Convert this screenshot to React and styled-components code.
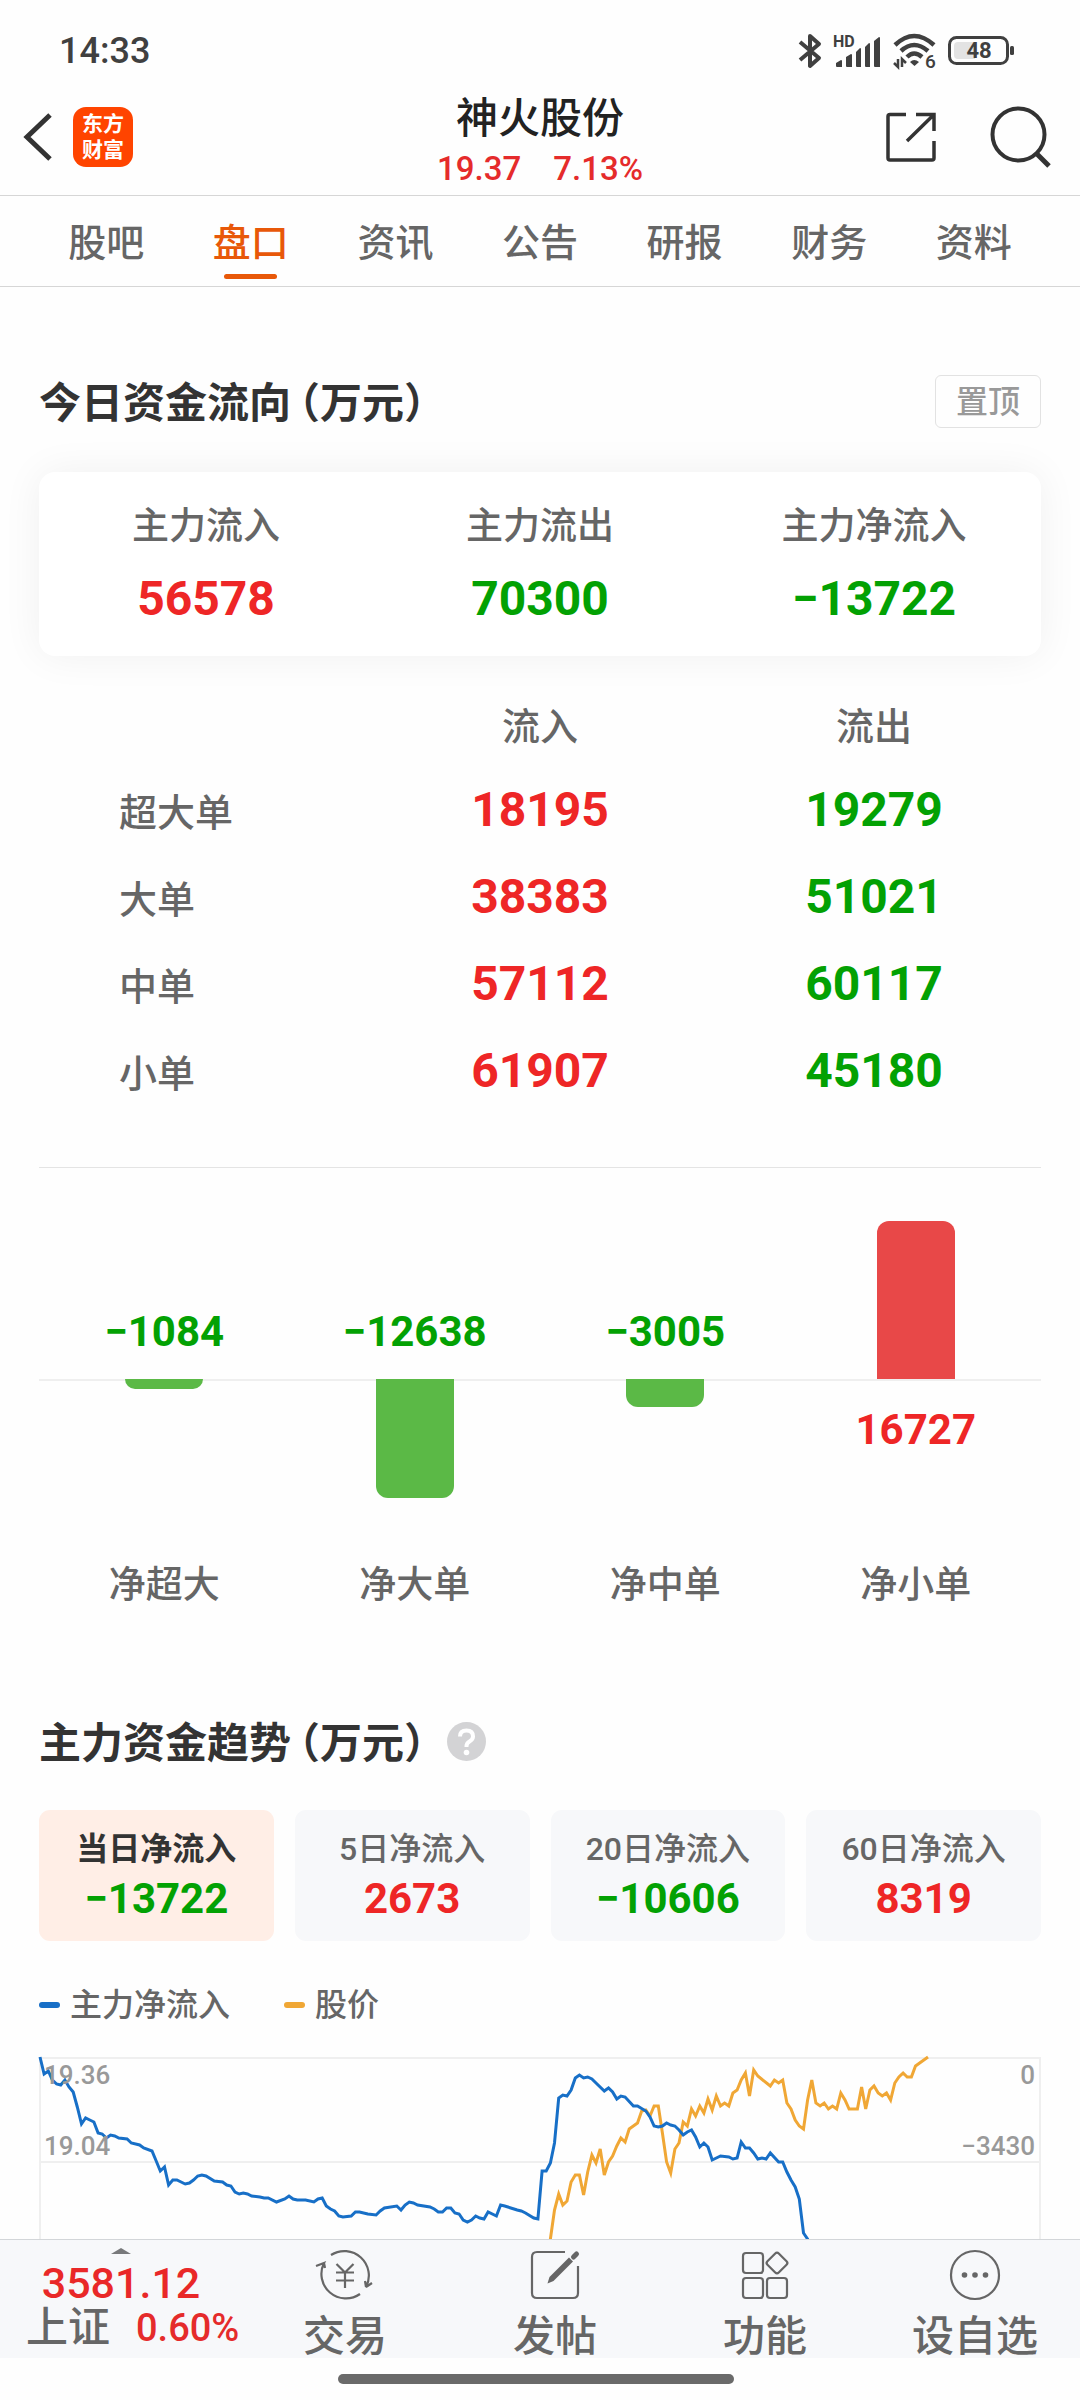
import React, { useState } from "react";
import styled, { createGlobalStyle } from "styled-components";

const color = {
  page: "#fefefe",
  panel: "#f7f8fa",
  ink: "#333333",
  text: "#666666",
  muted: "#999999",
  line: "#d6d6d6",
  grid: "#efefef",
  up: "#ee2626",
  down: "#03a103",
  barUp: "#e84848",
  barDown: "#5bb946",
  accent: "#e85809",
  flow: "#176fc7",
  price: "#f0a735",
};

const signColor = (n) => (n < 0 ? color.down : color.up);
const format = (n) => (n < 0 ? `−${-n}` : `${n}`);

const GlobalStyle = createGlobalStyle`
  *, *::before, *::after { box-sizing: border-box; }
  body {
    margin: 0;
    background: ${color.page};
    color: ${color.text};
    font-family: Roboto, "Noto Sans CJK SC", sans-serif;
    font-weight: 500;
  }
  button {
    margin: 0;
    padding: 0;
    border: 0;
    background: none;
    color: inherit;
    font: inherit;
    cursor: pointer;
  }
  a { color: inherit; text-decoration: none; }
  h1, h2, p { margin: 0; }
  svg { display: block; flex: none; }
`;

const Shell = styled.div`
  display: flex;
  flex-direction: column;
  height: 100vh;
`;

/* ---------- status bar ---------- */

const StatusBar = styled.div`
  display: flex;
  align-items: center;
  justify-content: space-between;
  height: 79px;
  padding: 22px 66px 0 59px;
  color: #404040;
`;

const Clock = styled.span`
  font-size: 36px;
  line-height: 44px;
`;

const StatusIcons = styled.div`
  display: flex;
  align-items: center;
  gap: 10px;
`;

/* ---------- header ---------- */

const Header = styled.header`
  display: grid;
  grid-template-columns: 1fr auto 1fr;
  align-items: center;
  height: 117px;
  padding: 0 23px;
  border-bottom: 1px solid ${color.line};
`;

const HeaderSide = styled.div`
  display: flex;
  align-items: center;
  justify-content: ${(p) => (p.$end ? "flex-end" : "flex-start")};
  gap: ${(p) => (p.$end ? "54px" : "20px")};
  color: ${color.ink};
`;

const Logo = styled.a`
  display: grid;
  place-content: center;
  width: 60px;
  height: 60px;
  border-radius: 13px;
  background: #ff4400;
  color: #ffffff;
  font-size: 21px;
  font-weight: 700;
  line-height: 26px;
`;

const Quote = styled.div`
  display: flex;
  flex-direction: column;
  align-items: center;
  padding-top: 14px;
`;

const StockName = styled.h1`
  color: #222222;
  font-size: 42px;
  font-weight: 500;
  line-height: 50px;
`;

const StockPrice = styled.p`
  display: flex;
  gap: 32px;
  color: #e52b2b;
  font-size: 33px;
  line-height: 50px;
`;

/* ---------- tabs ---------- */

const Tabs = styled.nav`
  display: grid;
  grid-template-columns: repeat(7, 1fr);
  padding: 0 34px;
  border-bottom: 1px solid ${color.line};
`;

const Tab = styled.a`
  display: flex;
  flex-direction: column;
  align-items: center;
  gap: 7px;
  padding: 23px 0 7px;
  color: ${(p) => (p.$active ? color.accent : color.text)};
  font-size: 38px;
  line-height: 48px;

  &::after {
    content: "";
    width: 53px;
    height: 5px;
    border-radius: 3px;
    background: ${(p) => (p.$active ? color.accent : "transparent")};
  }
`;

/* ---------- content ---------- */

const Content = styled.main`
  flex: 1;
  min-height: 0;
  padding: 88px 39px 0;
  overflow-y: auto;
  scrollbar-width: none;
`;

const SectionHead = styled.div`
  display: flex;
  align-items: center;
  gap: 22px;
  margin-top: ${(p) => p.$top || 0}px;
`;

const SectionTitle = styled.h2`
  padding-top: 5px;
  color: ${color.ink};
  font-size: 42px;
  font-weight: 700;
  line-height: 48px;
`;

const Unit = styled.span`
  margin-left: 8px;
  font-feature-settings: "halt";
`;

const PinButton = styled.button`
  margin-left: auto;
  padding: 2px 20px 0;
  border: 1px solid #e2e2e2;
  border-radius: 6px;
  color: ${color.muted};
  font-size: 32px;
  line-height: 49px;
`;

const Summary = styled.dl`
  display: grid;
  grid-template-columns: repeat(3, 1fr);
  margin: 44px 0 0;
  padding: 33px 0 29px;
  border-radius: 16px;
  background: #ffffff;
  box-shadow: 0 0 40px rgba(0, 0, 0, 0.06);
  text-align: center;
`;

const SummaryItem = styled.div`
  display: grid;
  gap: 22px;
`;

const SummaryLabel = styled.dt`
  font-size: 37px;
  line-height: 44px;
`;

const SummaryValue = styled.dd`
  margin: 0;
  color: ${(p) => p.$color};
  font-size: 48px;
  font-weight: 700;
  line-height: 56px;
`;

const FlowTable = styled.table`
  width: 100%;
  margin-top: 36px;
  border-collapse: collapse;
  table-layout: fixed;

  th, td { padding: 0; vertical-align: baseline; }
`;

const ColumnHead = styled.th`
  && { padding-bottom: 6px; }
  font-size: 38px;
  font-weight: 500;
  line-height: 70px;
`;

const RowHead = styled.th`
  && { padding-left: 80px; }
  font-size: 38px;
  font-weight: 500;
  line-height: 84px;
  text-align: left;
`;

const Amount = styled.td`
  color: ${(p) => p.$color};
  font-size: 48px;
  font-weight: 700;
  line-height: 84px;
  text-align: center;
`;

const BarChart = styled.div`
  display: grid;
  grid-template-columns: repeat(4, 1fr);
  margin-top: 51px;
  border-top: 1px solid #e4e4e4;
`;

const BarColumn = styled.div`
  display: flex;
  flex-direction: column;
  text-align: center;
`;

const BarUpper = styled.div`
  display: flex;
  flex-direction: column;
  align-items: center;
  justify-content: flex-end;
  height: 211px;
`;

const BarLower = styled.div`
  display: flex;
  flex-direction: column;
  align-items: center;
  height: 185px;
  box-shadow: inset 0 2px ${color.grid};
`;

const Bar = styled.div`
  width: 78px;
  border-radius: ${(p) => (p.$up ? "12px 12px 0 0" : "0 0 12px 12px")};
  background: ${(p) => (p.$up ? color.barUp : color.barDown)};
`;

const BarValue = styled.span`
  margin: 25px 0 21px;
  color: ${(p) => p.$color};
  font-size: 42px;
  font-weight: 700;
  line-height: 52px;
`;

const BarName = styled.span`
  font-size: 37px;
  line-height: 44px;
`;

const Periods = styled.div`
  display: grid;
  grid-template-columns: repeat(4, 1fr);
  gap: 21px;
  margin-top: 42px;
`;

const Period = styled.button`
  display: grid;
  gap: 4px;
  padding: 19px 0 16px;
  border-radius: 11px;
  background: ${(p) => (p.$active ? "#ffeee6" : color.panel)};
  color: ${(p) => (p.$active ? color.ink : color.text)};
  font-size: 32px;
  font-weight: ${(p) => (p.$active ? 700 : 500)};
  line-height: 40px;
`;

const PeriodValue = styled.span`
  color: ${(p) => p.$color};
  font-size: 42px;
  font-weight: 700;
  line-height: 52px;
`;

const Legend = styled.div`
  display: flex;
  gap: 54px;
  margin-top: 44px;
  font-size: 32px;
  line-height: 40px;
`;

const LegendItem = styled.span`
  display: flex;
  align-items: center;
  gap: 10px;

  &::before {
    content: "";
    width: 21px;
    height: 6px;
    border-radius: 3px;
    background: ${(p) => p.$color};
  }
`;

const TrendSvg = styled.svg`
  width: 100%;
  height: auto;
  margin-top: 32px;
  overflow: visible;

  text { fill: ${color.muted}; font-size: 26px; }
`;

/* ---------- bottom bar ---------- */

const BottomBar = styled.footer`
  display: grid;
  grid-template-columns: 240px repeat(4, 1fr);
  height: 119px;
  border-top: 1px solid #d3d6d9;
  background: ${color.panel};
`;

const IndexQuote = styled.a`
  display: flex;
  flex-direction: column;
  align-items: center;
  padding: 8px 0 0 2px;
`;

const IndexValue = styled.span`
  margin-top: 7px;
  color: #e92828;
  font-size: 43px;
  line-height: 44px;
`;

const IndexRow = styled.span`
  display: flex;
  align-items: center;
  align-self: flex-start;
  gap: 26px;
  margin-top: 1px;
  padding-left: 24px;
  font-size: 42px;
  line-height: 44px;
`;

const IndexChange = styled.span`
  color: #e52b2b;
  font-size: 38px;
`;

const Action = styled.button`
  display: flex;
  flex-direction: column;
  align-items: center;
  gap: 14px;
  padding-top: 9px;
  font-size: 42px;
  line-height: 44px;
`;

const HomeArea = styled.div`
  display: flex;
  justify-content: center;
  height: 42px;
  padding: 16px 8px 0 0;

  &::after {
    content: "";
    width: 37%;
    height: 10px;
    border-radius: 5px;
    background: #6a6a6a;
  }
`;

/* ---------- icons ---------- */

const BluetoothIcon = () => (
  <svg width="25" height="38" viewBox="0 0 25 38" fill="none" stroke="currentColor" strokeWidth="4" strokeLinejoin="round">
    <path d="M2 10 21 26 12 34V4l9 8L2 28" />
  </svg>
);

const SignalIcon = () => (
  <svg width="49" height="38" viewBox="0 0 49 38" fill="currentColor">
    <text x="0" y="15" fontSize="16" fontWeight="700">HD</text>
    <path d="M3 31l5-3q1 0 1 1v6H4q-1 0-1-1zM13 25l5-3q1 0 1 1v12h-5q-1 0-1-1zM23 20l4-4q1 0 1 1v18h-4q-1 0-1-1zM32 15l4-4q1 0 1 1v23h-4q-1 0-1-1zM41 9l5-4q1 0 1 1v29h-5q-1 0-1-1z" />
  </svg>
);

const WifiIcon = () => (
  <svg width="46" height="44" viewBox="0 -2 46 44" fill="none" stroke="currentColor">
    <path d="M3 14Q22-4 42 14M9 20q13-12 27 0M15 26q7-7 15 0" strokeWidth="4.500" />
    <path d="M18 31q4-4 9 0l-4.500 4z" fill="currentColor" stroke="none" />
    <path d="M6 28v8l-4-4M10 36v-8l4 4" strokeWidth="2.500" />
    <text x="33" y="37" fontSize="19" fontWeight="500" fill="currentColor" stroke="none">6</text>
  </svg>
);

const BatteryIcon = () => (
  <svg width="66" height="30" viewBox="0 0 66 30" fill="currentColor">
    <rect x="1.500" y="1.500" width="58" height="26" rx="7" fill="none" stroke="currentColor" strokeWidth="3" />
    <path d="M10 6h17v17H10q-4 0-4-4v-9q0-4 4-4z" fill="#e3e3e3" />
    <rect x="62" y="10" width="4" height="9" rx="1.500" />
    <text x="31" y="22" fontSize="22" fontWeight="700" textAnchor="middle">48</text>
  </svg>
);

const BackIcon = () => (
  <svg width="30" height="50" viewBox="0 0 30 50" fill="none" stroke="currentColor" strokeWidth="5">
    <path d="M27 3 4 25l23 22" />
  </svg>
);

const ShareIcon = () => (
  <svg width="50" height="50" viewBox="0 0 50 50" fill="none" stroke="currentColor" strokeWidth="3.500">
    <path d="M20 2.500H4q-2 0-2 2V46q0 2 2 2h42q2 0 2-2V29M30 2.500h18V19M47 3.500 21 29" />
  </svg>
);

const SearchIcon = () => (
  <svg width="67" height="62" viewBox="0 0 67 62" fill="none" stroke="currentColor" strokeWidth="4">
    <circle cx="28.500" cy="28.500" r="26" />
    <path d="m46 47 13 13" strokeWidth="5" />
  </svg>
);

const HelpIcon = () => (
  <svg width="39" height="39" viewBox="0 0 39 39" fill="none">
    <circle cx="19.500" cy="19.500" r="19.500" fill="#d3d3d5" />
    <path d="M13 14.500q0-6 6.500-6t6.500 6q0 3-3.500 5-3 1.800-3 4.500v1" stroke="#fff" strokeWidth="4" />
    <circle cx="19.500" cy="30.500" r="2.800" fill="#fff" />
  </svg>
);

const TradeIcon = () => (
  <svg width="60" height="52" viewBox="0 0 60 52" fill="none" stroke="currentColor" strokeWidth="2.200">
    <path d="M16 6A24.500 24.500 0 0 1 51 38l6-4M51 38l-1-6M45 45A24.500 24.500 0 0 1 9 14l-8 3M9 14l1 5" />
    <path d="m21.500 15 8.500 8.500 8.500-8.500M30 23.500V39M21 23.500h18M21 31.500h18" />
  </svg>
);

const PostIcon = () => (
  <svg width="52" height="52" viewBox="0 0 52 52" fill="none" stroke="currentColor" strokeWidth="2.200">
    <path d="M36 3H8Q3 3 3 8v36q0 5 5 5h36q5 0 5-5V17" />
    <path d="m18.500 34.500 2-6.500L40 8.500l4 4L24.500 32z" fill="currentColor" stroke="none" />
    <path d="m44.500 8 3-3" strokeWidth="5" strokeLinecap="round" />
  </svg>
);

const FunctionIcon = () => (
  <svg width="52" height="52" viewBox="0 0 52 52" fill="none" stroke="currentColor" strokeWidth="2.200">
    <rect x="4" y="4" width="20" height="20" rx="3" />
    <rect x="4" y="29" width="20" height="20" rx="3" />
    <rect x="28" y="29" width="20" height="20" rx="3" />
    <rect x="30" y="6" width="16" height="16" rx="2.500" transform="rotate(45 38 14)" />
  </svg>
);

const MoreIcon = () => (
  <svg width="52" height="52" viewBox="0 0 52 52" fill="currentColor">
    <circle cx="26" cy="26" r="24" fill="none" stroke="currentColor" strokeWidth="2.200" />
    <circle cx="15.500" cy="26" r="2.800" />
    <circle cx="26" cy="26" r="2.800" />
    <circle cx="36.500" cy="26" r="2.800" />
  </svg>
);

const UpMark = () => (
  <svg width="20" height="6" viewBox="0 0 20 6" fill="#78797b">
    <path d="M10 0 20 6H0z" />
  </svg>
);

/* ---------- data ---------- */

const TABS = ["股吧", "盘口", "资讯", "公告", "研报", "财务", "资料"];

const SUMMARY = [
  { label: "主力流入", value: 56578, tone: color.up },
  { label: "主力流出", value: 70300, tone: color.down },
  { label: "主力净流入", value: -13722, tone: color.down },
];

const FLOWS = [
  { name: "超大单", inflow: 18195, outflow: 19279 },
  { name: "大单", inflow: 38383, outflow: 51021 },
  { name: "中单", inflow: 57112, outflow: 60117 },
  { name: "小单", inflow: 61907, outflow: 45180 },
];

const NET = [
  { name: "净超大", value: -1084 },
  { name: "净大单", value: -12638 },
  { name: "净中单", value: -3005 },
  { name: "净小单", value: 16727 },
];

const PERIODS = [
  { label: "当日净流入", value: -13722 },
  { label: "5日净流入", value: 2673 },
  { label: "20日净流入", value: -10606 },
  { label: "60日净流入", value: 8319 },
];

const ACTIONS = [
  { label: "交易", Icon: TradeIcon },
  { label: "发帖", Icon: PostIcon },
  { label: "功能", Icon: FunctionIcon },
  { label: "设自选", Icon: MoreIcon },
];

/* Each pair is trading minute, depth below the top of the plot. */
const FLOW_SERIES = [
  [0, 0], [1, 17], [2, 14], [3, 23], [4, 27], [5, 28], [6, 23], [7, 30], [8, 35], [9, 50], [10, 67], [11, 61], [12, 63], [13, 65],
  [14, 76], [15, 77], [16, 81], [17, 78], [18, 79], [19, 81], [21, 82], [22, 86], [24, 88], [25, 91], [27, 94], [28, 104], [29, 114],
  [30, 110], [31, 128], [32, 123], [33, 123], [34, 125], [35, 127], [36, 126], [37, 123], [38, 119], [39, 118], [40, 119], [42, 124],
  [44, 125], [45, 128], [46, 129], [47, 135], [48, 137], [49, 136], [50, 137], [51, 139], [53, 140], [54, 141], [55, 141], [57, 145],
  [59, 142], [60, 139], [61, 142], [62, 143], [64, 143], [66, 145], [67, 142], [68, 141], [69, 149], [70, 152], [71, 154], [72, 159],
  [73, 160], [75, 159], [76, 155], [77, 155], [79, 157], [81, 158], [82, 154], [83, 151], [86, 149], [87, 153], [88, 148], [89, 145],
  [90, 146], [91, 148], [94, 150], [95, 152], [96, 155], [97, 155], [98, 151], [99, 151], [100, 156], [101, 157], [102, 163], [103, 165],
  [104, 163], [105, 159], [106, 161], [107, 162], [108, 155], [110, 159], [111, 148], [112, 149], [115, 153], [116, 154], [117, 156],
  [119, 161], [120, 162], [121, 114], [122, 114], [123, 106], [124, 86], [125, 41], [126, 38], [127, 39], [128, 33], [129, 21],
  [130, 18], [131, 21], [132, 20], [133, 22], [134, 26], [136, 34], [137, 31], [138, 35], [139, 42], [140, 39], [141, 40], [143, 49],
  [144, 49], [146, 54], [147, 60], [148, 69], [149, 70], [150, 69], [151, 66], [152, 68], [153, 69], [154, 73], [155, 78], [156, 75],
  [157, 73], [158, 80], [159, 90], [160, 86], [161, 90], [162, 103], [164, 99], [166, 100], [167, 102], [168, 101], [169, 85],
  [170, 91], [171, 91], [172, 96], [173, 102], [174, 101], [175, 102], [176, 96], [178, 105], [179, 105], [180, 115], [181, 123],
  [182, 130], [183, 142], [184, 176], [185, 182], [187, 230], [192, 300], [200, 350], [214, 415],
];

const PRICE_SERIES = [
  [0, 390], [20, 340], [45, 300], [70, 310], [95, 280], [115, 260], [122, 215], [123, 182], [124, 153], [125, 137], [126, 148],
  [127, 144], [128, 125], [129, 118], [130, 118], [131, 138], [132, 115], [133, 98], [134, 106], [135, 92], [136, 118], [137, 105],
  [138, 99], [139, 89], [140, 81], [141, 85], [142, 72], [144, 66], [145, 54], [146, 53], [147, 59], [148, 49], [149, 49], [150, 76],
  [151, 105], [152, 116], [153, 92], [154, 86], [155, 65], [156, 69], [157, 52], [158, 59], [159, 49], [160, 56], [161, 42], [162, 53],
  [163, 39], [164, 49], [165, 46], [166, 49], [167, 36], [168, 33], [169, 23], [170, 16], [171, 39], [172, 13], [173, 19], [176, 29],
  [177, 23], [178, 26], [179, 23], [180, 46], [181, 52], [182, 63], [183, 69], [184, 72], [185, 43], [186, 23], [187, 46], [188, 49],
  [189, 46], [190, 52], [191, 49], [192, 52], [193, 36], [194, 43], [195, 52], [197, 52], [198, 30], [199, 52], [200, 33], [201, 29],
  [202, 36], [203, 39], [204, 36], [205, 43], [206, 26], [207, 20], [208, 16], [209, 20], [210, 20], [211, 9], [214, 0],
];

const MINUTES = 241;
const toPoints = (series) =>
  series.map(([m, y]) => `${(1 + (m * 1000) / MINUTES).toFixed(1)},${y}`).join(" ");

/* ---------- parts ---------- */

function NetBars() {
  const scale = 158 / 16727;
  return (
    <BarChart>
      {NET.map(({ name, value }) => {
        const up = value > 0;
        const bar = <Bar $up={up} style={{ height: Math.round(Math.abs(value) * scale) }} />;
        const text = <BarValue $color={signColor(value)}>{format(value)}</BarValue>;
        return (
          <BarColumn key={name}>
            <BarUpper>{up ? bar : text}</BarUpper>
            <BarLower>{up ? text : bar}</BarLower>
            <BarName>{name}</BarName>
          </BarColumn>
        );
      })}
    </BarChart>
  );
}

function TrendChart() {
  return (
    <TrendSvg viewBox="0 0 1002 418" fill="none" role="img" aria-label="主力净流入 股价">
      <rect x="1" y="1" width="1000" height="416" stroke={color.grid} strokeWidth="2" />
      <path d="M1 105h1000M1 209h1000M1 313h1000" stroke={color.grid} strokeWidth="2" />
      <polyline points={toPoints(PRICE_SERIES)} stroke={color.price} strokeWidth="3" />
      <polyline points={toPoints(FLOW_SERIES)} stroke={color.flow} strokeWidth="3" />
      <text x="5" y="27">19.36</text>
      <text x="5" y="98">19.04</text>
      <text x="996" y="27" textAnchor="end">0</text>
      <text x="996" y="98" textAnchor="end">−3430</text>
    </TrendSvg>
  );
}

export default function App() {
  const [period, setPeriod] = useState(0);

  return (
    <>
      <GlobalStyle />
      <Shell>
        <StatusBar>
          <Clock>14:33</Clock>
          <StatusIcons>
            <BluetoothIcon />
            <SignalIcon />
            <WifiIcon />
            <BatteryIcon />
          </StatusIcons>
        </StatusBar>

        <Header>
          <HeaderSide>
            <button type="button" aria-label="返回"><BackIcon /></button>
            <Logo href="#home">
              <span>东方</span>
              <span>财富</span>
            </Logo>
          </HeaderSide>
          <Quote>
            <StockName>神火股份</StockName>
            <StockPrice>
              <span>19.37</span>
              <span>7.13%</span>
            </StockPrice>
          </Quote>
          <HeaderSide $end>
            <button type="button" aria-label="分享"><ShareIcon /></button>
            <button type="button" aria-label="搜索"><SearchIcon /></button>
          </HeaderSide>
        </Header>

        <Tabs>
          {TABS.map((name, i) => (
            <Tab key={name} href={`#tab-${i}`} $active={i === 1} aria-current={i === 1 ? "page" : undefined}>
              {name}
            </Tab>
          ))}
        </Tabs>

        <Content>
          <SectionHead>
            <SectionTitle>今日资金流向<Unit>（万元）</Unit></SectionTitle>
            <PinButton type="button">置顶</PinButton>
          </SectionHead>

          <Summary>
            {SUMMARY.map(({ label, value, tone }) => (
              <SummaryItem key={label}>
                <SummaryLabel>{label}</SummaryLabel>
                <SummaryValue $color={tone}>{format(value)}</SummaryValue>
              </SummaryItem>
            ))}
          </Summary>

          <FlowTable>
            <thead>
              <tr>
                <td />
                <ColumnHead scope="col">流入</ColumnHead>
                <ColumnHead scope="col">流出</ColumnHead>
              </tr>
            </thead>
            <tbody>
              {FLOWS.map(({ name, inflow, outflow }) => (
                <tr key={name}>
                  <RowHead scope="row">{name}</RowHead>
                  <Amount $color={color.up}>{inflow}</Amount>
                  <Amount $color={color.down}>{outflow}</Amount>
                </tr>
              ))}
            </tbody>
          </FlowTable>

          <NetBars />

          <SectionHead $top={107}>
            <SectionTitle>主力资金趋势<Unit>（万元）</Unit></SectionTitle>
            <button type="button" aria-label="说明"><HelpIcon /></button>
          </SectionHead>

          <Periods>
            {PERIODS.map(({ label, value }, i) => (
              <Period key={label} type="button" $active={i === period} aria-pressed={i === period} onClick={() => setPeriod(i)}>
                {label}
                <PeriodValue $color={signColor(value)}>{format(value)}</PeriodValue>
              </Period>
            ))}
          </Periods>

          <Legend>
            <LegendItem $color={color.flow}>主力净流入</LegendItem>
            <LegendItem $color={color.price}>股价</LegendItem>
          </Legend>
          <TrendChart />
        </Content>

        <BottomBar>
          <IndexQuote href="#index">
            <UpMark />
            <IndexValue>3581.12</IndexValue>
            <IndexRow>
              上证
              <IndexChange>0.60%</IndexChange>
            </IndexRow>
          </IndexQuote>
          {ACTIONS.map(({ label, Icon }) => (
            <Action key={label} type="button">
              <Icon />
              {label}
            </Action>
          ))}
        </BottomBar>
        <HomeArea />
      </Shell>
    </>
  );
}
